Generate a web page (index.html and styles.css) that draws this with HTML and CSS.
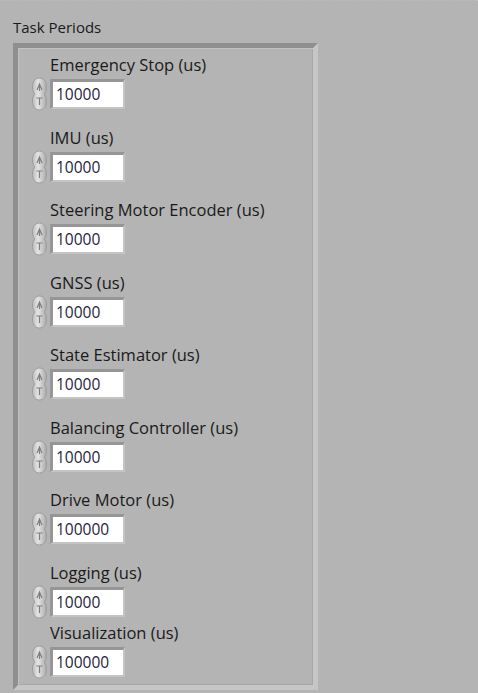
FILE: index.html
```html
<!DOCTYPE html>
<html>
<head>
<meta charset="utf-8">
<link rel="stylesheet" href="styles.css">
</head>
<body>
<div class="dots"></div>
<div class="caption">Task Periods</div>
<div class="frame">
  <div class="field">
    <div class="label">Emergency Stop (us)</div>
    <div class="control"><span class="spin"></span><div class="num">10000</div></div>
  </div>
  <div class="field">
    <div class="label">IMU (us)</div>
    <div class="control"><span class="spin"></span><div class="num">10000</div></div>
  </div>
  <div class="field">
    <div class="label">Steering Motor Encoder (us)</div>
    <div class="control"><span class="spin"></span><div class="num">10000</div></div>
  </div>
  <div class="field">
    <div class="label">GNSS (us)</div>
    <div class="control"><span class="spin"></span><div class="num">10000</div></div>
  </div>
  <div class="field">
    <div class="label">State Estimator (us)</div>
    <div class="control"><span class="spin"></span><div class="num">10000</div></div>
  </div>
  <div class="field">
    <div class="label">Balancing Controller (us)</div>
    <div class="control"><span class="spin"></span><div class="num">10000</div></div>
  </div>
  <div class="field">
    <div class="label">Drive Motor (us)</div>
    <div class="control"><span class="spin"></span><div class="num">100000</div></div>
  </div>
  <div class="field field-tight">
    <div class="label">Logging (us)</div>
    <div class="control"><span class="spin"></span><div class="num">10000</div></div>
  </div>
  <div class="field">
    <div class="label">Visualization (us)</div>
    <div class="control"><span class="spin"></span><div class="num">100000</div></div>
  </div>
</div>
<script>
document.querySelectorAll('.spin').forEach(function (s) {
  s.innerHTML = '<svg width="15" height="34" viewBox="0 0 15 34">' +
    '<defs><linearGradient id="g" x1="0" y1="0" x2="1" y2="0">' +
    '<stop offset="0" stop-color="#bdbdbd"/><stop offset="0.4" stop-color="#e4e4e4"/><stop offset="1" stop-color="#aaaaaa"/></linearGradient></defs>' +
    '<path d="M7.5 1 C12 1 14.5 5 14.5 10 C14.5 14 13 16.5 12 17 C13 17.5 14.5 20 14.5 24 C14.5 29 12 33 7.5 33 C3 33 0.5 29 0.5 24 C0.5 20 2 17.5 3 17 C2 16.5 0.5 14 0.5 10 C0.5 5 3 1 7.5 1 Z" fill="url(#g)" stroke="#9c9c9c" stroke-width="1"/>' +
    '<path d="M5 13 L7.5 7 L10 13 M7.5 8 L7.5 14" fill="none" stroke="#7e7e7e" stroke-width="1.2"/>' +
    '<path d="M4.5 21 L10.5 21 M7.5 21 L7.5 28" fill="none" stroke="#7e7e7e" stroke-width="1.2"/>' +
    '</svg>';
});
</script>
</body>
</html>
```

FILE: styles.css
```css
html, body {
  margin: 0;
  padding: 0;
}
body {
  background: #b4b4b4;
  width: 478px;
  height: 693px;
  overflow: hidden;
  font-family: "Open Sans", "Noto Sans", "DejaVu Sans", sans-serif;
  color: #1a1a1a;
}
.dots {
  height: 1px;
  background: repeating-linear-gradient(90deg, #c2c2c2 0 1px, #b4b4b4 1px 3px);
}
.caption {
  margin: 16px 0 0 13px;
  font-size: 15px;
  line-height: 20px;
  height: 20px;
  white-space: nowrap;
}
.frame {
  margin: 6px 0 0 13px;
  width: 305px;
  height: 647px;
  box-sizing: border-box;
  border-style: solid;
  border-width: 5px;
  border-color: #8f8f8f #c6c6c6 #c6c6c6 #8f8f8f;
  box-shadow: inset 1px 1px 0 #c2c2c2, inset -1px -1px 0 #a8a8a8;
  padding: 7px 0 0 14px;
}
.field {
  margin-bottom: 16.5px;
}
.field-tight {
  margin-bottom: 4px;
}
.label {
  margin-left: 18px;
  font-size: 16.5px;
  line-height: 20px;
  height: 20px;
  white-space: nowrap;
}
.control {
  margin-top: 2px;
  display: flex;
  align-items: center;
  gap: 3px;
  height: 34px;
}
.spin {
  width: 15px;
  height: 34px;
  display: block;
}
.spin svg {
  display: block;
}
.num {
  width: 75px;
  height: 30px;
  box-sizing: border-box;
  border-style: solid;
  border-width: 3px 2px 2px 3px;
  border-color: #969696 #c4c4c4 #c4c4c4 #969696;
  background: #ffffff;
  padding-left: 3px;
  font-size: 15.5px;
  line-height: 25px;
  color: #1e1e3c;
}
```
